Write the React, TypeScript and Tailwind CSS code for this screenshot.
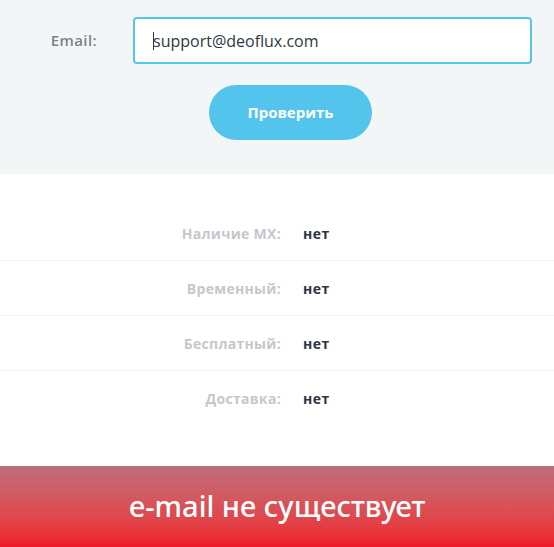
export default function App() {
  const rows = [
    { label: "Наличие MX:", value: "нет" },
    { label: "Временный:", value: "нет" },
    { label: "Бесплатный:", value: "нет" },
    { label: "Доставка:", value: "нет" },
  ];

  return (
    <div className="w-[554px] h-[547px] flex flex-col bg-white font-['Open_Sans',sans-serif] overflow-hidden">
      {/* Form */}
      <div className="h-[174px] bg-[#f3f6f7] flex flex-col pt-[17px]">
        <div className="flex items-center">
          <label className="w-[133px] pr-[36px] text-right text-[15px] tracking-[0.4px] text-[#7d8288] font-semibold">
            Email:
          </label>
          <div className="w-[399px] h-[47px] bg-white border-2 border-[#56c5eb] rounded-[4px] flex items-center pl-[18px] text-[16px] text-[#30373f]">
            <span className="w-px h-[18px] bg-[#30373f] -mr-px"></span>
            support@deoflux.com
          </div>
        </div>
        <button className="mt-[21px] ml-[209px] w-[163px] h-[55px] rounded-full bg-[#53c4eb] text-white text-[15px] font-bold">
          Проверить
        </button>
      </div>

      {/* Results */}
      <div className="h-[292px] pt-[32px]">
        {rows.map((r, i) => (
          <div
            key={r.label}
            className={`h-[55px] flex items-center ${i < rows.length - 1 ? "border-b border-[#f1f1f1]" : ""}`}
          >
            <span className="w-[281px] text-right text-[14px] tracking-[0.3px] font-bold text-[#c4c8cd]">{r.label}</span>
            <span className="ml-[22px] text-[14px] tracking-[0.5px] font-bold text-[#2e3540]">{r.value}</span>
          </div>
        ))}
      </div>

      {/* Status */}
      <div className="flex-1 bg-gradient-to-b from-[#be6d7a] to-[#ef1729] flex items-center justify-center">
        <span className="text-white text-[29px] font-medium font-['Noto_Sans',sans-serif] -mt-[2px]">
          e-mail не существует
        </span>
      </div>
    </div>
  );
}
